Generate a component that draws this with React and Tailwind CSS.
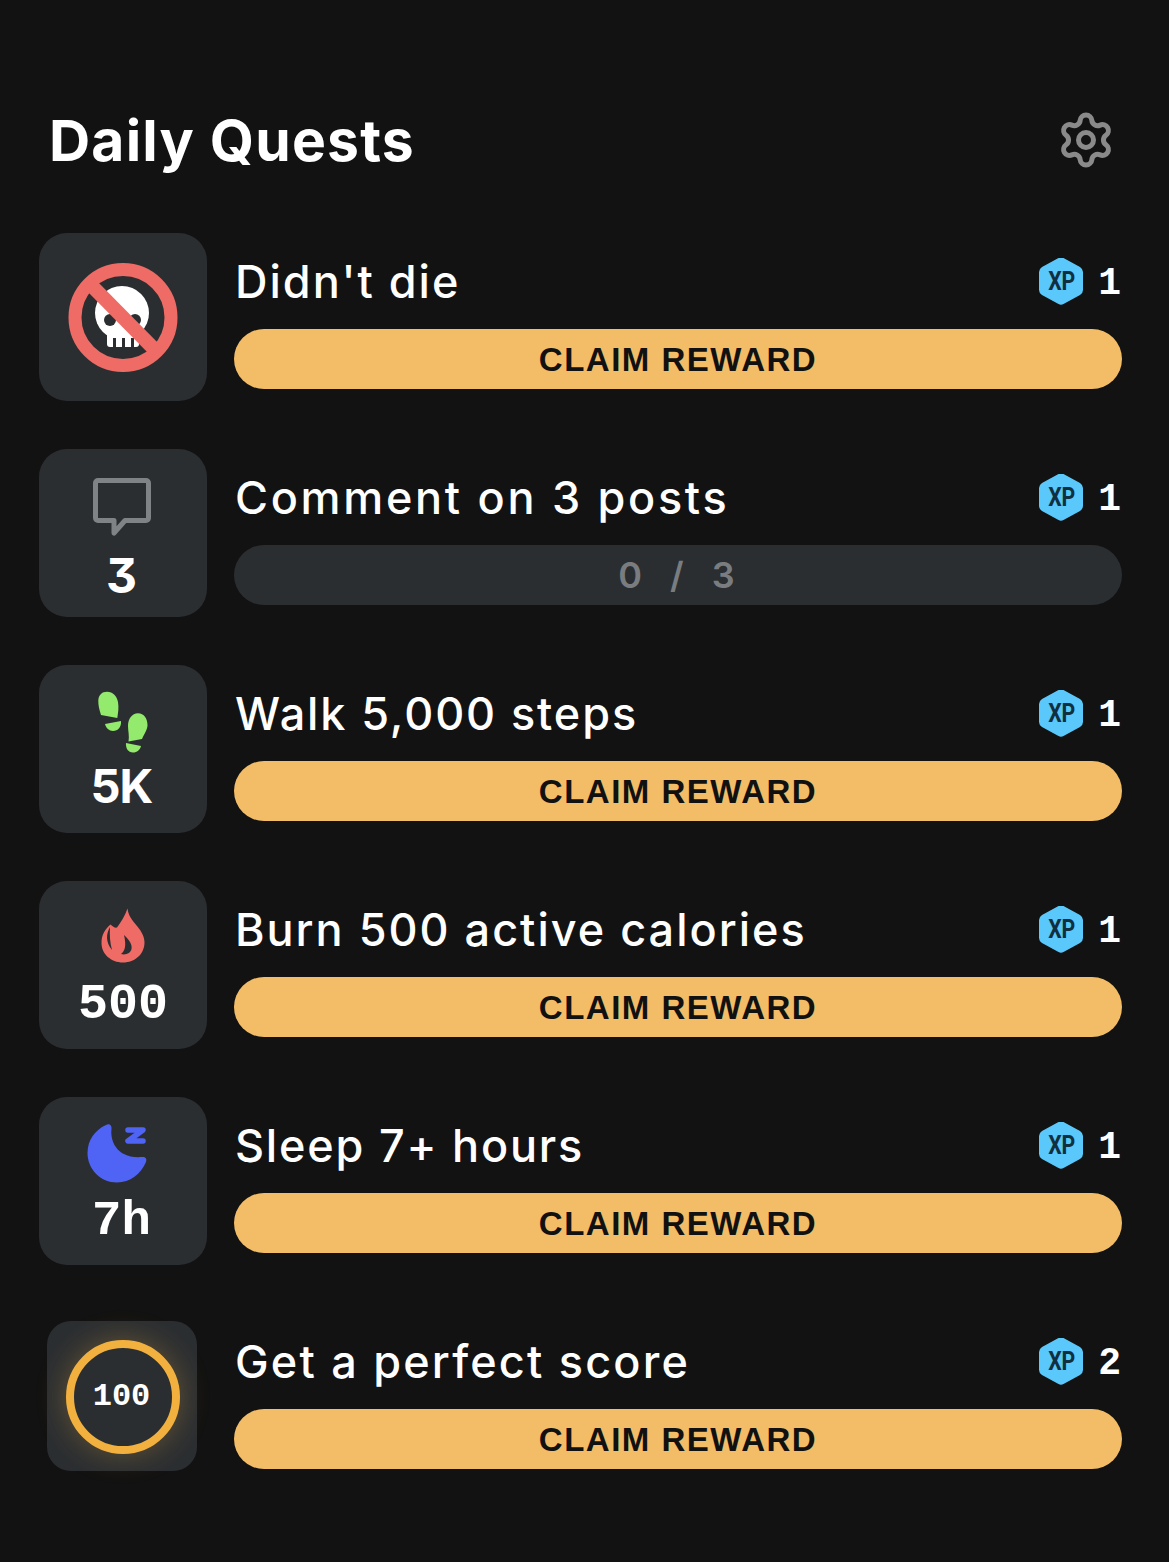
import React from "react";
import { Settings } from "lucide-react";

const sans = "font-['Inter','Liberation_Sans',sans-serif]";
const mono = "font-['Liberation_Mono',monospace]";

function SkullIcon() {
  return (
    <svg width="168" height="168" viewBox="0 0 168 168" fill="none">
      <circle cx="83" cy="80" r="27" fill="#fff" />
      <rect x="68" y="92" width="32" height="22" rx="3" fill="#fff" />
      <circle cx="71" cy="87" r="6" fill="#2b2e31" />
      <circle cx="96" cy="87" r="6" fill="#2b2e31" />
      <rect x="74" y="105" width="3" height="10" fill="#2b2e31" />
      <rect x="83" y="105" width="3" height="10" fill="#2b2e31" />
      <rect x="92" y="105" width="3" height="10" fill="#2b2e31" />
      <circle cx="84" cy="84.5" r="48" stroke="#ee6b66" strokeWidth="13" />
      <path d="M50 50 L118 119" stroke="#ee6b66" strokeWidth="14" />
    </svg>
  );
}

function CommentIcon() {
  return (
    <svg width="58" height="58" viewBox="0 0 58 58" fill="none" className="mr-[3px] mt-[29px]">
      <path d="M5 2.500H53a2.500 2.500 0 0 1 2.500 2.500V40a2.500 2.500 0 0 1-2.500 2.500H32L21 55V42.500H5A2.500 2.500 0 0 1 2.500 40V5A2.500 2.500 0 0 1 5 2.500Z" stroke="#7f8386" strokeWidth="5" strokeLinejoin="round" />
    </svg>
  );
}

function FeetIcon() {
  return (
    <svg width="50" height="62" viewBox="0 0 50 62" fill="#93ea6d" className="mt-[26px]">
      <path d="M3 24C1 18 .3 14 .3 10C.3 4 4 .7 9 .7C15 .7 19 5 20 11C21 17 20 22 19.300 27Z" />
      <path d="M7 33L23 30C23.500 36 20 40 15 40C11 40 8 37 7 33Z" />
      <path d="M30.500 50.500C31.500 45 30 40 30 35C30 28 34 22.300 40 22.300C46 22.300 49.500 28 49.500 34C49.500 39 46 43 44 48Z" />
      <path d="M28 52L43 55C42 59 39 61.500 35 61.500C30 61.500 27.500 57 28 52Z" />
    </svg>
  );
}

function FlameIcon() {
  return (
    <svg width="44" height="55" viewBox="0 0 44 55" fill="none" className="mt-[27px]">
      <path fill="#ee6b66" d="M26.500.5C27.500 8 31 12 36 18c5 6 7.500 11 7.500 16.500C43.500 46 34 54.500 22 54.500S.5 46 .5 35C.5 27 4 21 9.500 16.500 12 19 14 20 16 19.500 20 14 24 8 26.500.5Z" />
      <path fill="#2b2e31" d="M9 19C5 26 4.500 34 11 42C9 35 8.500 27 9 19Z" />
      <path fill="#2b2e31" d="M23 27C28 32 31.500 36 30.500 41C29.500 45 25 47.500 20 46C24 43 25.500 38 23 27Z" />
    </svg>
  );
}

function MoonIcon() {
  return (
    <svg width="60" height="60" viewBox="0 0 60 60" fill="none" className="mr-[12px] mt-[26px]">
      <path fill="#4f63f5" d="M19 2C22 0 25 2 24.500 6C23 18 30 36 55 34C59 33.500 60 36 59 39C54 51 43 59.500 30 59.500C13.500 59.500.5 46 .5 30C.5 17 8 7 19 2Z" />
      <path d="M41 7H56L41 18H56" stroke="#4f63f5" strokeWidth="5.500" strokeLinecap="round" strokeLinejoin="round" />
    </svg>
  );
}

function XpBadge() {
  return (
    <div className="relative -mt-[2px] flex h-[48px] w-[44px] items-center justify-center">
      <svg width="44" height="48" viewBox="0 0 44 48" className="absolute inset-0">
        <path fill="#5ac8fa" d="M19.500 1 L24.500 1 L41 10 Q44 12 44 15 L44 33 Q44 36 41 38 L24.500 47 Q22 48.500 19.500 47 L3 38 Q0 36 0 33 L0 15 Q0 12 3 10 L19.500 1 Z" />
      </svg>
      <span className="relative font-['Roboto',sans-serif] text-[25px] font-bold leading-none tracking-[-0.5px] text-[#10303f] [transform:scaleX(0.85)]">XP</span>
    </div>
  );
}

const tile = "flex h-[168px] w-[168px] flex-none flex-col items-center rounded-[28px] bg-[#2b2e31]";

function Quest({ icon, title, xp = 1, progress, tracking = "tracking-[2px]" }) {
  return (
    <div className="flex h-[168px] gap-[27px]">
      {icon}
      <div className="flex min-w-0 flex-1 flex-col pt-[24px]">
        <div className="flex h-[50px] items-center justify-between">
          <span className={`${sans} pl-[1px] text-[45px] font-medium leading-[50px] text-white ${tracking}`}>{title}</span>
          <div className="flex items-center gap-[15px] pr-[1px]">
            <XpBadge />
            <span className={`${mono} mt-[4px] text-[38px] font-bold leading-none text-white`}>{xp}</span>
          </div>
        </div>
        {progress ? (
          <div className={`${sans} mt-[22px] flex h-[60px] items-center justify-center rounded-full bg-[#2b2e31] pr-[2px] text-[36px] font-semibold tracking-[1px] [word-spacing:17px] text-[#7a7d80]`}>
            {progress}
          </div>
        ) : (
          <button className="mt-[22px] flex h-[60px] items-center justify-center rounded-full bg-[#f3bc67] pt-[2px] font-['Liberation_Sans',sans-serif] text-[33px] font-bold tracking-[1.5px] text-[#111]">
            CLAIM REWARD
          </button>
        )}
      </div>
    </div>
  );
}

export default function App() {
  return (
    <div className="min-h-screen bg-[#121212] pb-[81px] pl-[39px] pr-[47px] pt-[110px]">
      <div className="mb-[63px] flex h-[60px] items-center justify-between pl-[10px]">
        <h1 className={`${sans} mt-[2px] text-[57px] font-bold leading-[60px] tracking-[1.2px] text-white`}>Daily Quests</h1>
        <Settings size={60} strokeWidth={2} color="#8a8a8a" className="mr-[6px]" />
      </div>
      <div className="flex flex-col gap-[48px]">
        <Quest title="Didn't die" icon={<div className={tile}><SkullIcon /></div>} />
        <Quest
          title="Comment on 3 posts"
          progress="0 / 3"
          tracking="tracking-[2.7px]"
          icon={
            <div className={tile}>
              <CommentIcon />
              <span className={`${sans} mr-[3px] mt-[10px] text-[48px] font-bold leading-[60px] text-white [font-feature-settings:'cv09']`}>3</span>
            </div>
          }
        />
        <Quest
          title="Walk 5,000 steps"
          tracking="tracking-[1.9px]"
          icon={
            <div className={tile}>
              <FeetIcon />
              <span className={`${sans} mr-[3px] mt-[3px] text-[47px] font-bold leading-[60px] tracking-[-1px] text-white`}>5K</span>
            </div>
          }
        />
        <Quest
          title="Burn 500 active calories"
          icon={
            <div className={tile}>
              <FlameIcon />
              <span className={`${mono} mt-[12px] text-[50px] font-bold leading-[60px] text-white`}>500</span>
            </div>
          }
        />
        <Quest
          title="Sleep 7+ hours"
          tracking="tracking-[1.8px]"
          icon={
            <div className={tile}>
              <MoonIcon />
              <span className={`${mono} mr-[3px] mt-[8px] text-[49px] font-bold leading-[60px] text-white`}>7h</span>
            </div>
          }
        />
        <Quest
          title="Get a perfect score"
          xp={2}
          tracking="tracking-[2.2px]"
          icon={
            <div className="mr-[2px] flex h-[166px] w-[166px] flex-none items-center justify-center">
              <div className="flex h-[150px] w-[150px] items-center justify-center rounded-[24px] bg-[#2b2e31] pl-[2px] pt-[2px]">
                <div className="flex h-[114px] w-[114px] flex-none items-center justify-center rounded-full border-[8px] border-[#f2b13f] bg-[#2b2e31] shadow-[0_0_30px_rgba(242,177,63,0.3)]">
                  <span className={`${mono} mr-[3px] text-[32px] font-bold leading-none text-white`}>100</span>
                </div>
              </div>
            </div>
          }
        />
      </div>
    </div>
  );
}
